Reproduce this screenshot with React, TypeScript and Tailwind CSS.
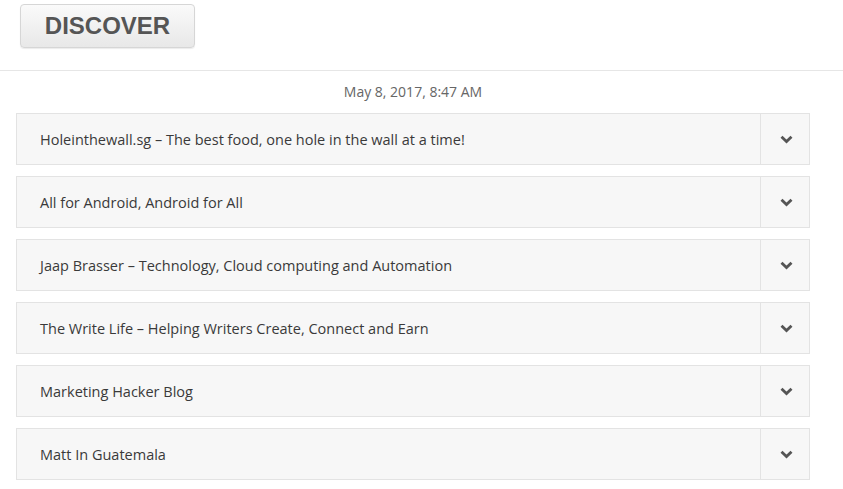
const feeds = [
  'Holeinthewall.sg – The best food, one hole in the wall at a time!',
  'All for Android, Android for All',
  'Jaap Brasser – Technology, Cloud computing and Automation',
  'The Write Life – Helping Writers Create, Connect and Earn',
  'Marketing Hacker Blog',
  'Matt In Guatemala',
];

const Chevron = () => (
  <svg width="13" height="9" viewBox="0 0 13 9" className="text-[#555]">
    <path d="M1.5 1.8 L6.5 6.6 L11.5 1.8" fill="none" stroke="currentColor" strokeWidth="2.8" />
  </svg>
);

export default function App() {
  return (
    <div className="min-h-screen bg-white font-['Open_Sans',sans-serif]">
      <header className="h-[71px] border-b border-[#e6e6e6] pl-5 pt-1">
        <button className="h-[44px] w-[175px] rounded-[4px] border border-[#d6d6d6] bg-gradient-to-b from-[#fafafa] to-[#e8e8e8] font-['Liberation_Sans',Arial,sans-serif] text-[24px] font-bold text-[#555] shadow-[0_1px_1px_rgba(0,0,0,0.08)]">
          DISCOVER
        </button>
      </header>

      <div className="w-[794px] ml-4">
        <div className="pt-[11px] pb-[12px] text-center text-[14px] leading-[19px] text-[#666]">
          May 8, 2017, 8:47 AM
        </div>
        <div className="flex flex-col gap-[11px]">
          {feeds.map((title) => (
            <div key={title} className="flex h-[52px] border border-[#e3e3e3] bg-[#f7f7f7]">
              <div className="flex flex-1 items-center pl-[23px] pt-[2px] text-[14.5px] text-[#3a3a3a]">{title}</div>
              <div className="flex w-[49px] items-center justify-center border-l border-[#e3e3e3] pl-[2px]">
                <Chevron />
              </div>
            </div>
          ))}
        </div>
      </div>
    </div>
  );
}
